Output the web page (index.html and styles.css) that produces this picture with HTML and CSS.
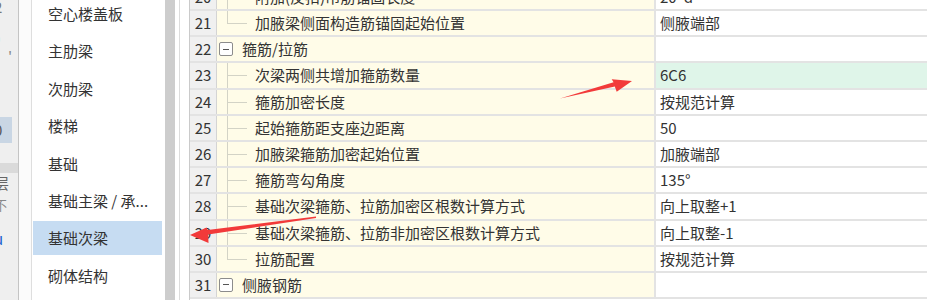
FILE: index.html
```html
<!DOCTYPE html>
<html lang="zh-CN">

<head>
  <meta charset="UTF-8">
  <meta name="viewport" content="width=device-width, initial-scale=1.0">
  <title>计算设置</title>
  <link rel="stylesheet" href="styles.css">
</head>

<body>
  <div class="window">
    <!-- 被遮住的后面窗口边缘 -->
    <div class="edge">
      <div class="frag f1"><span>2</span></div>
      <div class="frag f2"><span>0</span></div>
      <div class="frag f3"><span>'</span></div>
      <div class="frag f4"><span>0</span></div>
      <div class="frag f5"></div>
      <div class="frag f6"><span>层</span></div>
      <div class="frag f7"><span>不</span></div>
      <div class="frag f8"><span>u</span></div>
    </div>
    <div class="gutter"></div>

    <!-- 左侧构件列表 -->
    <div class="side">
      <ul class="list">
        <li class="item">空心楼盖板</li>
        <li class="item">主肋梁</li>
        <li class="item">次肋梁</li>
        <li class="item">楼梯</li>
        <li class="item">基础</li>
        <li class="item">基础主梁 / 承...</li>
        <li class="item active">基础次梁</li>
        <li class="item">砌体结构</li>
      </ul>
    </div>
    <div class="scrollbar"></div>
    <div class="split"></div>

    <!-- 右侧设置表格 -->
    <div class="grid">
      <div class="row">
        <div class="num">20</div>
        <div class="name child">附加(反扣)吊筋锚固长度</div>
        <div class="val">20*d</div>
      </div>
      <div class="row">
        <div class="num">21</div>
        <div class="name child last">加腋梁侧面构造筋锚固起始位置</div>
        <div class="val">侧腋端部</div>
      </div>
      <div class="row">
        <div class="num">22</div>
        <div class="name group"><span class="toggle"></span>箍筋/拉筋</div>
        <div class="val"></div>
      </div>
      <div class="row">
        <div class="num">23</div>
        <div class="name child">次梁两侧共增加箍筋数量</div>
        <div class="val current">6C6</div>
      </div>
      <div class="row">
        <div class="num">24</div>
        <div class="name child">箍筋加密长度</div>
        <div class="val">按规范计算</div>
      </div>
      <div class="row">
        <div class="num">25</div>
        <div class="name child">起始箍筋距支座边距离</div>
        <div class="val">50</div>
      </div>
      <div class="row">
        <div class="num">26</div>
        <div class="name child">加腋梁箍筋加密起始位置</div>
        <div class="val">加腋端部</div>
      </div>
      <div class="row">
        <div class="num">27</div>
        <div class="name child">箍筋弯勾角度</div>
        <div class="val">135°</div>
      </div>
      <div class="row">
        <div class="num">28</div>
        <div class="name child">基础次梁箍筋、拉筋加密区根数计算方式</div>
        <div class="val">向上取整+1</div>
      </div>
      <div class="row">
        <div class="num">29</div>
        <div class="name child">基础次梁箍筋、拉筋非加密区根数计算方式</div>
        <div class="val">向上取整-1</div>
      </div>
      <div class="row">
        <div class="num">30</div>
        <div class="name child last">拉筋配置</div>
        <div class="val">按规范计算</div>
      </div>
      <div class="row">
        <div class="num">31</div>
        <div class="name group"><span class="toggle"></span>侧腋钢筋</div>
        <div class="val"></div>
      </div>
    </div>

    <!-- 截图标注箭头 -->
    <svg class="marks" width="927" height="300" viewBox="0 0 927 300">
      <polygon points="560,98.5 614.8,86.6 616.7,91.7 632,81 611.7,79.3 613.6,82.2" fill="#f23a3a" />
      <polygon points="316,216.5 316,218 208.2,234.6 208.5,243 190,235 206.6,227.5 207.6,230" fill="#f23a3a" />
    </svg>
  </div>
</body>

</html>
```

FILE: styles.css
```css
* {
  box-sizing: border-box;
}

html,
body {
  margin: 0;
  padding: 0;
  background-color: #fff;
}

ul {
  margin: 0;
  padding: 0;
  list-style: none;
}

.window {
  position: relative;
  display: flex;
  width: 927px;
  height: 300px;
  overflow: hidden;
  font-family: "Noto Sans CJK SC", "Noto Sans", sans-serif;
  font-size: 15px;
  color: #333;
}

/* 左边被裁掉的窗口 */
.edge {
  flex: none;
  width: 19px;
  background-color: #efefef;
  border-right: 1px solid #c4c4c4;
  overflow: hidden;
}

.edge .frag {
  height: 20px;
  line-height: 20px;
  white-space: nowrap;
  overflow: hidden;
  color: #555;
}

.edge .frag span {
  display: inline-block;
  margin-left: -6px;
}

.edge .f1 {
  margin-top: -3px;
  height: 26px;
  color: #777;
}

.edge .f2 {
  margin-top: 6px;
  height: 22px;
  margin-left: -2px;
}

.edge .f3 {
  height: 66px;
  line-height: 14px;
  color: #888;
  padding-left: 8px;
}

.edge .f3 span {
  margin-left: 0;
}

.edge .f4 {
  height: 26px;
  line-height: 26px;
  width: 12px;
  background-color: #c9d6e4;
}

.edge .f5 {
  margin-top: 20px;
  height: 10px;
  background-color: #dadada;
}

.edge .f6 {
  height: 22px;
  color: #666;
}

.edge .f7 {
  height: 34px;
  color: #888;
  font-size: 13px;
}

.edge .f8 {
  height: 22px;
  color: #1a5fd0;
  text-decoration: underline;
}

.gutter {
  flex: none;
  width: 13px;
  background-color: #fbfbfb;
  border-right: 1px solid #dedede;
}

/* 构件列表 */
.side {
  flex: none;
  width: 133px;
  background-color: #fff;
}

.list {
  margin-top: -3px;
  padding: 0 3px 0 1px;
}

.item {
  height: 34px;
  margin-bottom: 3.4px;
  padding-left: 15px;
  line-height: 34px;
  white-space: nowrap;
  overflow: hidden;
}

.item.active {
  background-color: #c6dcf2;
}

.scrollbar {
  flex: none;
  width: 10px;
  background-color: #cdcdcd;
}

.split {
  flex: none;
  width: 14px;
  background-color: #fff;
  background-image: linear-gradient(#dcdcdc, #dcdcdc);
  background-size: 1px 100%;
  background-position: 4px 0;
  background-repeat: no-repeat;
}

/* 设置表格 */
.grid {
  flex: 1;
  margin-top: -15.2px;
  border-left: 1px solid #cacaca;
}

.row {
  display: grid;
  grid-template-columns: 27px 437px 1fr;
  height: 26.2px;
  border-bottom: 2px solid #e3e3e3;
}

.num {
  background-color: #f0f0f0;
  border-right: 1px solid #d4d4d4;
  text-align: center;
  line-height: 24px;
}

.name {
  background-color: #fffce8;
  line-height: 24px;
  white-space: nowrap;
  overflow: hidden;
}

.name.child {
  padding-left: 38px;
  background-image:
    linear-gradient(#d3d3c6, #d3d3c6),
    linear-gradient(#d3d3c6, #d3d3c6);
  background-size: 1px 100%, 20px 1px;
  background-position: 10px 0, 10px 12px;
  background-repeat: no-repeat;
}

.name.child.last {
  background-size: 1px 13px, 20px 1px;
}

.name.group {
  display: flex;
  align-items: center;
  padding-left: 2px;
}

.toggle {
  flex: none;
  width: 14px;
  height: 14px;
  margin-right: 9px;
  border: 1px solid #8c8c8c;
  border-radius: 2px;
  background-color: #fff;
  background-image: linear-gradient(#555, #555);
  background-size: 6px 1px;
  background-position: center;
  background-repeat: no-repeat;
}

.val {
  padding-left: 4px;
  background-color: #fff;
  border-left: 2px solid #e3e3e3;
  line-height: 24px;
  white-space: nowrap;
}

.val.current {
  background-color: #dff5e9;
}

.marks {
  position: absolute;
  top: 0;
  left: 0;
  pointer-events: none;
}
```
